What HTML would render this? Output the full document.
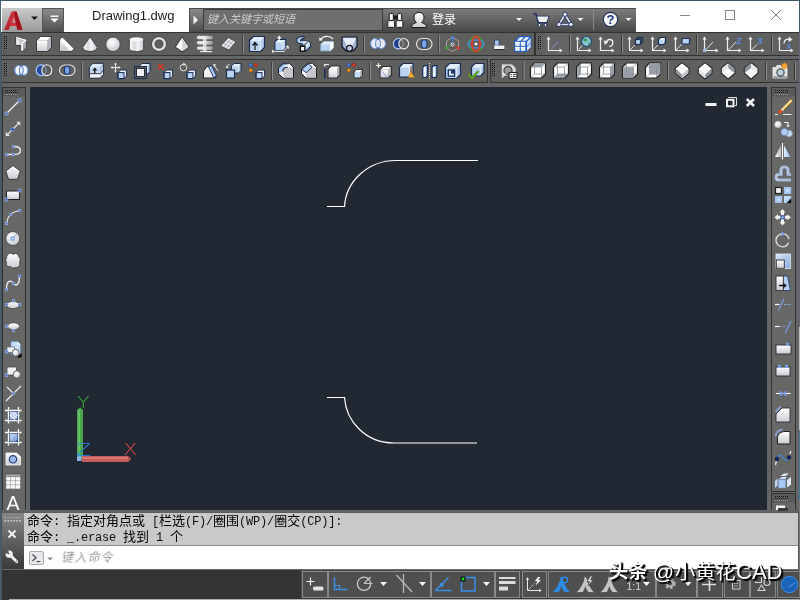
<!DOCTYPE html><html lang="zh-CN"><head><meta charset="utf-8"><title>Drawing1.dwg</title><style>
html,body{margin:0;padding:0;}
body{width:800px;height:600px;overflow:hidden;background:#646566;position:relative;font-family:"Liberation Sans","Noto Sans CJK SC",sans-serif;}
div,span{position:absolute;box-sizing:border-box;}
#doc,#stxt,#login,.hl,#cmdt,#wm,svg{will-change:transform;}
#ttl{left:0;top:0;width:800px;height:32px;background:#fff;}
#topline{left:0;top:0;width:800px;height:1px;background:#3f5563;}
#leftline{left:0;top:0;width:1px;height:600px;background:#466070;}
#leftline2{left:1px;top:32px;width:1px;height:568px;background:#46545c;}
#rightline{left:799px;top:0;width:1px;height:600px;background:linear-gradient(#3f5563 0,#3f5563 32px,#66667a 32px,#66667a 327px,#c0c0c0 327px,#c0c0c0 430px,#4c7898 430px,#4c7898 500px,#777 500px,#777 100%);}
#abtn{left:2px;top:8px;width:40px;height:24px;background:linear-gradient(#c9c9c9,#9b9b9b);}
#qbtn{left:42px;top:8px;width:22px;height:24px;background:linear-gradient(#8c8c8c,#4e4e4e);border:1px solid #555;border-bottom:0;}
#doc{left:92px;top:7px;font-size:13px;line-height:18px;color:#1a1a1a;white-space:nowrap;}
#srch{left:189px;top:8px;width:194px;height:24px;background:linear-gradient(#8a8a8a,#4c4c4c);border-top:1px solid #4a4a4a;border-left:1px solid #4a4a4a;}
#sbox{left:203px;top:9px;width:180px;height:22px;background:#6f6f6f;border:1px solid #3a3a3a;}
#stxt{left:207px;top:11px;font-size:11px;line-height:17px;color:#cacaca;font-style:italic;white-space:nowrap;}
#info{left:383px;top:8px;width:253px;height:24px;background:linear-gradient(#7c7c7c,#474747);border-top:1px solid #4a4a4a;}
#login{left:432px;top:11px;font-size:12px;line-height:18px;color:#fff;white-space:nowrap;}
.tb{background:#5f5f5e;border:1px solid #323232;}
#cv{left:30px;top:87px;width:737px;height:423px;background:#222831;}
#hist{left:24px;top:513px;width:774px;height:33px;background:#c9c9c9;}
#botline{left:9px;top:599px;width:791px;height:1px;background:#b0b0b0;}
#fr1{left:0;top:510px;width:800px;height:3px;background:linear-gradient(#66676a,#5a5b5e);}
#fr2{left:798px;top:510px;width:2px;height:60px;background:#555;}
#histl{left:2px;top:513px;width:22px;height:56px;background:linear-gradient(#868686,#3a3a3a);}
.hl{left:26.5px;font-family:"Liberation Mono","Noto Sans CJK SC",monospace;font-size:12px;line-height:16px;color:#111;white-space:pre;letter-spacing:-0.2px;}
.hl b{font-weight:400;font-size:13px;position:static;color:#000;letter-spacing:0;}
#cmd{left:24px;top:545px;width:774px;height:24px;background:#fff;border-top:1px solid #8a8a8a;}
#cmdt{left:62px;top:549px;font-size:12px;letter-spacing:1.2px;line-height:18px;color:#9a9a9a;white-space:nowrap;transform:skewX(-12deg);}
#stat{left:2px;top:569px;width:798px;height:31px;background:#343434;border-top:1px solid #6a6a6a;}
#tray{left:301px;top:570px;width:499px;height:28px;background:#4a4a4a;}
.wm{top:557.3px;line-height:30px;color:#fff;white-space:nowrap;text-shadow:1px 1px 0 #000,2px 2px 1px #000;will-change:transform;}
#wm1{left:608.8px;font-size:19.3px;font-weight:700;top:557.3px;}
#wm2{left:647.2px;font-size:21px;white-space:pre;}
#wm3{left:675.3px;font-size:20.3px;}
#wm4{left:736px;font-size:22px;}
svg{position:absolute;left:0;top:0;}
</style></head><body>
<div id="ttl"></div>
<div id="abtn"></div><div id="qbtn"></div>
<div id="doc">Drawing1.dwg</div>
<div id="srch"></div><div id="sbox"></div><div id="stxt">键入关键字或短语</div>
<div id="info"></div><div id="login">登录</div>
<div class="tb" style="left:1px;top:32px;width:534px;height:24px"></div>
<div class="tb" style="left:535px;top:32px;width:266px;height:24px"></div>
<div class="tb" style="left:1px;top:59px;width:487px;height:24px"></div>
<div class="tb" style="left:490px;top:59px;width:311px;height:24px"></div>
<div class="tb" style="left:2px;top:87px;width:24px;height:425px;background:#676766"></div>
<div class="tb" style="left:771px;top:87px;width:25px;height:405px;background:#676766"></div>
<div class="tb" style="left:771px;top:493px;width:25px;height:20px;background:#676766"></div>
<div id="cv"></div>
<div id="fr1"></div><div id="fr2"></div><div id="hist"></div><div id="histl"></div>
<div class="hl" style="top:513.5px"><b>命令</b>: <b>指定对角点或</b> [<b>栏选</b>(F)/<b>圈围</b>(WP)/<b>圈交</b>(CP)]:</div>
<div class="hl" style="top:529.5px"><b>命令</b>: _.erase <b>找到</b> 1 <b>个</b></div>
<div id="cmd"></div><div id="cmdt">键入命令</div>
<div id="stat"></div><div id="tray"></div><div id="botline"></div>
<svg width="800" height="600" viewBox="0 0 800 600">

<defs>
<linearGradient id="gw" x1="0" y1="0" x2="0" y2="1"><stop offset="0" stop-color="#ffffff"/><stop offset="1" stop-color="#c9cbd0"/></linearGradient>
<linearGradient id="gh" x1="0" y1="0" x2="1" y2="0"><stop offset="0" stop-color="#ffffff"/><stop offset="1" stop-color="#b9bcc2"/></linearGradient>
<linearGradient id="gb" x1="0" y1="0" x2="0" y2="1"><stop offset="0" stop-color="#d6e6f8"/><stop offset="1" stop-color="#9fc0ea"/></linearGradient>
<radialGradient id="gs" cx="0.4" cy="0.35" r="0.7"><stop offset="0" stop-color="#ffffff"/><stop offset="1" stop-color="#c4c6cc"/></radialGradient>
<linearGradient id="ga" x1="0" y1="0" x2="1" y2="1"><stop offset="0" stop-color="#dc4650"/><stop offset="1" stop-color="#9a0e18"/></linearGradient>
<linearGradient id="gh2" x1="0" y1="0" x2="1" y2="0"><stop offset="0" stop-color="#e8e8e8"/><stop offset="0.4" stop-color="#f6f6f6"/><stop offset="1" stop-color="#9c9c9c"/></linearGradient>
<linearGradient id="gbd" x1="0" y1="0" x2="1" y2="1"><stop offset="0" stop-color="#d6e6f8"/><stop offset="1" stop-color="#6a90d8"/></linearGradient>
<linearGradient id="gbd2" x1="0" y1="0" x2="1" y2="1"><stop offset="0" stop-color="#d6e6f8"/><stop offset="1" stop-color="#8aaae0"/></linearGradient>
<linearGradient id="gbh" x1="0" y1="0" x2="1" y2="0"><stop offset="0" stop-color="#e6f0fc"/><stop offset="1" stop-color="#8fb3e6"/></linearGradient>
<linearGradient id="gcy" x1="0" y1="0" x2="1" y2="0"><stop offset="0" stop-color="#ffffff"/><stop offset="0.35" stop-color="#d8dade"/><stop offset="0.6" stop-color="#f4f4f6"/><stop offset="1" stop-color="#c4c6cc"/></linearGradient>
<linearGradient id="gwd" x1="0" y1="0" x2="1" y2="1"><stop offset="0" stop-color="#f2f2f4"/><stop offset="0.6" stop-color="#c6c8ce"/><stop offset="1" stop-color="#e0e0e4"/></linearGradient>
</defs>

<path d="M4 30L11.5 11.5H16.5L22.5 30H17.5L16.3 26H10.2L8.6 30Z" fill="url(#ga)" /><path d="M14 11.5H16.5L22.5 30H17.5Z" fill="#a3121c" /><path d="M11.2 23L13.6 16.5L15.5 23Z" fill="#b0b0b0" /><path d="M10.2 26L13.5 17L14.5 19L12.5 23.5H15.8L16.3 26Z" fill="#d8343e" /><path d="M12.3 20.5L14.6 17.3L13.4 21.3Z" fill="#f2a8a8" /><path d="M31 16.5H38L34.5 20Z" fill="#1a1a1a" /><rect x="50.5" y="15.5" width="8" height="1.4" fill="#ffffff" /><path d="M50.5 18.5H58.5L54.5 22.5Z" fill="#ffffff" /><path d="M193.5 15.5L198 20L193.5 24.5Z" fill="#f0f0f0" /><rect x="393.5" y="15.5" width="4" height="4" fill="#1a1a1a" /><rect x="389.2" y="13.5" width="4.2" height="7" fill="#e4e4e4" stroke="#1a1a1a" stroke-width="1" rx="1.2"/><rect x="387.8" y="20.6" width="6.8" height="6.8" fill="#f4f4f4" stroke="#1a1a1a" stroke-width="1" rx="1"/><rect x="390.3" y="14.8" width="1.4" height="4.5" fill="#ffffff" /><rect x="397.5" y="13.5" width="4.2" height="7" fill="#e4e4e4" stroke="#1a1a1a" stroke-width="1" rx="1.2"/><rect x="396.1" y="20.6" width="6.8" height="6.8" fill="#f4f4f4" stroke="#1a1a1a" stroke-width="1" rx="1"/><rect x="398.6" y="14.8" width="1.4" height="4.5" fill="#ffffff" /><path d="M411.5 27.5C411.5 24 414 23.5 416.5 22.5C414.5 21 414 19 414 17C414 14 416 12.5 419 12.5C422 12.5 424 14 424 17C424 19 423.5 21 421.5 22.5C424 23.5 426.5 24 426.5 27.5Z" fill="url(#gw)" stroke="#1a1a1a" stroke-width="1" /><path d="M516 18H522L519 21Z" fill="#f0f0f0" /><path d="M577.5 18H583.5L580.5 21Z" fill="#f0f0f0" /><path d="M625.5 18H631.5L628.5 21Z" fill="#f0f0f0" /><path d="M533.5 14H536L538.5 22.5H546.5L548.5 16.5H537" fill="none" stroke="#1c2f5e" stroke-width="1.6" stroke-linejoin="round"/><path d="M537.2 16.5H548.5L546.5 22H539Z" fill="#f2f2f2" /><circle cx="539.5" cy="25" r="1.5" fill="#f2f2f2" stroke="#1c2f5e" stroke-width="1" /><circle cx="545.5" cy="25" r="1.5" fill="#f2f2f2" stroke="#1c2f5e" stroke-width="1" /><path d="M565 14.5L559 24.5H571Z" fill="none" stroke="#1c2f5e" stroke-width="3.2" stroke-linejoin="round"/><path d="M565 14.5L559 24.5H571Z" fill="none" stroke="#e6e6f0" stroke-width="1.6" stroke-linejoin="round"/><circle cx="565" cy="14.3" r="2.2" fill="#e6e6f0" stroke="#1c2f5e" stroke-width="0.9" /><circle cx="559" cy="24.5" r="2.2" fill="#e6e6f0" stroke="#1c2f5e" stroke-width="0.9" /><circle cx="571" cy="24.5" r="2.2" fill="#e6e6f0" stroke="#1c2f5e" stroke-width="0.9" /><line x1="593.5" y1="10" x2="593.5" y2="30" stroke="#8a8a8a" stroke-width="1" /><circle cx="610.5" cy="19.5" r="7.2" fill="#f4f4f4" stroke="#22325a" stroke-width="1.2" /><text x="610.6" y="24.2" font-family="Liberation Sans, sans-serif" font-weight="bold" font-size="13" fill="#1c2f8a" text-anchor="middle">?</text><line x1="680" y1="15.5" x2="690" y2="15.5" stroke="#858585" stroke-width="1" /><rect x="725.5" y="10.5" width="9" height="9" fill="none" stroke="#858585" stroke-width="1" /><path d="M771 10L781 20M781 10L771 20" fill="none" stroke="#808080" stroke-width="1" />
<path d="M327 206.5H344.5C346 181 368 160.5 396 160.5H478" fill="none" stroke="#fff" stroke-width="1.2"/><path d="M327 397.5H344.5C346 421.5 366 443 394 443H477" fill="none" stroke="#fff" stroke-width="1.2"/><rect x="705.5" y="103" width="11" height="3" fill="#f0f0f0" /><path d="M728.5 98V97.5H736.5V105.5H735" fill="none" stroke="#e0e0e0" stroke-width="1" /><rect x="727" y="99.8" width="6.5" height="6.5" fill="#222831" stroke="#f0f0f0" stroke-width="2" /><path d="M746.8 99L754 106M754 99L746.8 106" fill="none" stroke="#f0f0f0" stroke-width="2.6" /><rect x="77" y="410" width="6" height="49" fill="#4aa74d" /><path d="M77 410L80 407.3L83 410Z" fill="#4aa74d" /><rect x="78.2" y="410" width="1.6" height="48" fill="#6fc470" /><rect x="82" y="456" width="46.5" height="6" fill="#c65d5d" /><path d="M128.5 456L131 459L128.5 462Z" fill="#c65d5d" /><rect x="83" y="457.2" width="45" height="1.6" fill="#de7c7c" /><text x="83.3" y="408" font-family="DejaVu Sans, Liberation Sans, sans-serif" font-weight="200" font-size="16.5" fill="#3bb540" text-anchor="middle" transform="translate(83.3 0) scale(1.25 1) translate(-83.3 0)">Y</text><text x="130" y="455.5" font-family="DejaVu Sans, Liberation Sans, sans-serif" font-weight="200" font-size="16.5" fill="#e04a4a" text-anchor="middle" transform="translate(130.2 0) scale(1.25 1) translate(-130 0)">X</text><text x="83.3" y="455.7" font-family="DejaVu Sans, Liberation Sans, sans-serif" font-weight="200" font-size="17.5" fill="#2f84ea" text-anchor="middle" transform="translate(83.3 0) scale(1.3 1) translate(-83.3 0)">Z</text><rect x="77" y="456.5" width="4.5" height="4.5" fill="#8fb0ea" />
<rect x="4" y="36" width="1" height="1" fill="#101010" shape-rendering="crispEdges"/><rect x="6" y="36" width="1" height="1" fill="#101010" shape-rendering="crispEdges"/><rect x="7" y="36" width="1" height="1" fill="#6e6e6e" shape-rendering="crispEdges"/><rect x="4" y="38" width="1" height="1" fill="#101010" shape-rendering="crispEdges"/><rect x="6" y="38" width="1" height="1" fill="#101010" shape-rendering="crispEdges"/><rect x="7" y="38" width="1" height="1" fill="#6e6e6e" shape-rendering="crispEdges"/><rect x="4" y="40" width="1" height="1" fill="#101010" shape-rendering="crispEdges"/><rect x="6" y="40" width="1" height="1" fill="#101010" shape-rendering="crispEdges"/><rect x="7" y="40" width="1" height="1" fill="#6e6e6e" shape-rendering="crispEdges"/><rect x="4" y="42" width="1" height="1" fill="#101010" shape-rendering="crispEdges"/><rect x="6" y="42" width="1" height="1" fill="#101010" shape-rendering="crispEdges"/><rect x="7" y="42" width="1" height="1" fill="#6e6e6e" shape-rendering="crispEdges"/><rect x="4" y="44" width="1" height="1" fill="#101010" shape-rendering="crispEdges"/><rect x="6" y="44" width="1" height="1" fill="#101010" shape-rendering="crispEdges"/><rect x="7" y="44" width="1" height="1" fill="#6e6e6e" shape-rendering="crispEdges"/><rect x="4" y="46" width="1" height="1" fill="#101010" shape-rendering="crispEdges"/><rect x="6" y="46" width="1" height="1" fill="#101010" shape-rendering="crispEdges"/><rect x="7" y="46" width="1" height="1" fill="#6e6e6e" shape-rendering="crispEdges"/><rect x="4" y="48" width="1" height="1" fill="#101010" shape-rendering="crispEdges"/><rect x="6" y="48" width="1" height="1" fill="#101010" shape-rendering="crispEdges"/><rect x="7" y="48" width="1" height="1" fill="#6e6e6e" shape-rendering="crispEdges"/><path d="M15.8 37L26.3 40V47.5L22 51.5L20.8 51V45.5H16.8L15.8 44Z" fill="#c6c8ce" stroke="#2e3034" stroke-width="0.9" stroke-linejoin="round"/><path d="M16.4 38L21.4 43.6V45H17L16.4 44Z" fill="url(#gh)" /><path d="M23 43.6L25.9 40.9V47.2L23 50.1Z" fill="#a6a8b0" /><rect x="21.3" y="43.6" width="1.7" height="7.2" fill="#ffffff" /><path d="M16.2 37.4L25.8 40.3L21.8 43.8" fill="none" stroke="#ffffff" stroke-width="1.2" /><path d="M36.5 40.5L40.5 36.5H51.5L47.5 40.5Z" fill="#ffffff" /><path d="M47.5 40.5L51.5 36.5V47.5L47.5 51.5Z" fill="#b0b3ba" /><rect x="36.5" y="40.5" width="11" height="11" fill="url(#gw)" /><path d="M36.5 40.5L40.5 36.5H51.5V47.5L47.5 51.5H36.5Z" fill="none" stroke="#2c2e32" stroke-width="0.9" stroke-linejoin="miter"/><path d="M59.7 39.3L62.3 36.8L74.3 48.8L72 51.3H59.7Z" fill="#ffffff" stroke="#2e3034" stroke-width="0.9" stroke-linejoin="round"/><path d="M60.2 40.8L70.6 50.9H60.2Z" fill="url(#gwd)" /><path d="M90 36.8L82.9 47.3C82.9 52.8 97.2 52.8 97.2 47.3Z" fill="url(#gcy)" stroke="#3a3c40" stroke-width="0.9" stroke-linejoin="round"/><circle cx="113" cy="44.3" r="7.2" fill="url(#gs)" stroke="#3a3c40" stroke-width="0.8" /><path d="M129.3 39.5V49C129.3 52.3 143.7 52.3 143.7 49V39.5C143.7 36.3 129.3 36.3 129.3 39.5Z" fill="url(#gcy)" stroke="#3a3c40" stroke-width="0.9" /><ellipse cx="136.5" cy="39.6" rx="6.6" ry="2.2" fill="#fafafa" stroke="#d4d6da" stroke-width="0.5" /><circle cx="159" cy="44" r="5.8" fill="none" stroke="#3a3c40" stroke-width="3.8" /><circle cx="159" cy="44" r="5.8" fill="none" stroke="#dedfe2" stroke-width="2.6" /><path d="M182 37L175.3 47L182 51.8L189 47Z" fill="#ffffff" stroke="#2a2c30" stroke-width="1" stroke-linejoin="round"/><path d="M182 37.8L188.4 46.9L182 51.2Z" fill="#d4d6da" /><rect x="203" y="36" width="3.6" height="15.5" fill="#cfd0d6" /><rect x="196.8" y="35.8" width="16.2" height="3.4" fill="url(#gh2)" rx="1.7" opacity="0.92"/><rect x="196.8" y="41" width="16.2" height="3.4" fill="url(#gh2)" rx="1.7" opacity="0.92"/><rect x="196.8" y="46.4" width="16.2" height="3.4" fill="url(#gh2)" rx="1.7" opacity="0.92"/><rect x="200" y="51" width="12" height="1.2" fill="#e8e8e8" /><path d="M228.5 37.5L236 41.8L229 50L220.5 46Z" fill="#e6e6ec" stroke="#3a3c40" stroke-width="0.9" stroke-linejoin="round"/><path d="M225.8 40.5L233.8 44.5M223.2 43.2L231.5 47.2M231 39L223.5 47.3M233.5 40.4L226.2 48.7" fill="none" stroke="#9a9ca6" stroke-width="0.7" /><line x1="242.5" y1="35" x2="242.5" y2="53" stroke="#3e3e3e" stroke-width="1" /><line x1="243.5" y1="35" x2="243.5" y2="53" stroke="#8c8c8c" stroke-width="1" /><path d="M249.5 40.5L253.5 36.5H264.5L260.5 40.5Z" fill="#e2eefb" /><path d="M260.5 40.5L264.5 36.5V47.5L260.5 51.5Z" fill="#b4ccee" /><rect x="249.5" y="40.5" width="11" height="11" fill="#b9d3f0" /><path d="M249.8 40.5H260.5V51.2M260.5 40.5L264.0 37.0" fill="none" stroke="#f4f8fe" stroke-width="0.8" /><path d="M249.5 40.5L253.5 36.5H264.5V47.5L260.5 51.5H249.5Z" fill="none" stroke="#1b2d55" stroke-width="1.2" stroke-linejoin="miter"/><path d="M255 50V43.5M252.5 45.5L255 42.5L257.5 45.5" fill="none" stroke="#10131a" stroke-width="1.2" /><path d="M274.8 41.9L277.40000000000003 39.3H285.8L283.2 41.9Z" fill="#e2eefb" /><path d="M283.2 41.9L285.8 39.3V48.099999999999994L283.2 50.699999999999996Z" fill="#b4ccee" /><rect x="274.8" y="41.9" width="8.4" height="8.8" fill="#b9d3f0" /><path d="M275.1 41.9H283.2V50.4M283.2 41.9L285.3 39.8" fill="none" stroke="#f4f8fe" stroke-width="0.8" /><path d="M274.8 41.9L277.40000000000003 39.3H285.8V48.099999999999994L283.2 50.699999999999996H274.8Z" fill="none" stroke="#1b2d55" stroke-width="1.2" stroke-linejoin="miter"/><path d="M279.2 41.5V37.5" fill="none" stroke="#ffffff" stroke-width="1.3" /><path d="M276.8 38.6L279.2 35.6L281.6 38.6Z" fill="#ffffff" /><path d="M272.3 51.3H284.5M284.3 50.5L288 46.5M285.8 46.3H288.2V48.8M272.8 49.8V52.8" fill="none" stroke="#ffffff" stroke-width="1" /><path d="M296.8 40.2C296.8 37.5 299.5 36.5 304 36.5V38.6C301.5 38.6 300.6 39.4 300.6 41H306C309 41 310.6 42.6 310.6 45V46.5L306.3 50.6H303V45.6C303 44.2 302 43.6 300.2 43.6C298 43.6 296.8 42.2 296.8 40.2Z" fill="#b9d3f0" stroke="#1b2d55" stroke-width="1.1" stroke-linejoin="round"/><path d="M300.8 41.3H306C308.3 41.3 309.8 42.4 310 44.3L306 48V45.5C306 43.5 304.5 42.5 302 42.5Z" fill="#dbe8f8" /><path d="M301 48.5L307.5 42" fill="none" stroke="#10131a" stroke-width="1" /><rect x="300.3" y="46.3" width="4.6" height="4.9" fill="#f4f4f4" stroke="#08090c" stroke-width="1.3" /><path d="M320.5 44.5L324 41.5H333.5V48L330 51H320.5Z" fill="#b9d3f0" stroke="#7d94b8" stroke-width="0.8" /><path d="M320.5 44.5L324 41.5H333.5L330 44.5Z" fill="#e2eefb" /><path d="M330 44.5L333.5 41.5V48L330 51Z" fill="#ffffff" /><path d="M320.5 39.5C323 35.5 330 35.5 333 39" fill="none" stroke="#f4f4f4" stroke-width="1.2" /><path d="M319 37.5L319.5 41L323 40Z" fill="#f4f4f4" /><path d="M342 37H357V46.5L353 51H346L342 46.5Z" fill="#a3b3d2" stroke="#131a2c" stroke-width="1.2" stroke-linejoin="round"/><path d="M343 38H356L352 46.5H347Z" fill="#e6ebf5" /><circle cx="349.5" cy="48.3" r="3" fill="#c2cde2" stroke="#10131a" stroke-width="1.2" /><line x1="363.5" y1="35" x2="363.5" y2="53" stroke="#3e3e3e" stroke-width="1" /><line x1="364.5" y1="35" x2="364.5" y2="53" stroke="#8c8c8c" stroke-width="1" /><ellipse cx="374.9" cy="43.6" rx="4.3" ry="5" fill="#e8ebf6" stroke="#6a92e0" stroke-width="1" /><ellipse cx="381.2" cy="43.6" rx="4.3" ry="5" fill="#e8ebf6" stroke="#6a92e0" stroke-width="1" /><ellipse cx="378" cy="43.6" rx="2.4" ry="4.2" fill="#e2e6f4" stroke="#3e6cc8" stroke-width="0.9" /><ellipse cx="398.3" cy="43.7" rx="4.9" ry="5.2" fill="#1f3f8c" stroke="#9dbcf0" stroke-width="1.1" /><ellipse cx="403.7" cy="43.7" rx="4.9" ry="5.2" fill="#5f5f5e" stroke="#f0f0f0" stroke-width="1.1" /><ellipse cx="398.3" cy="43.7" rx="4.9" ry="5.2" fill="none" stroke="#c8d4ec" stroke-width="0.6" /><rect x="416.5" y="38.5" width="15.5" height="11" fill="none" stroke="#e8e8e8" stroke-width="1.1" rx="5.5"/><ellipse cx="424.2" cy="44" rx="2.8" ry="4.2" fill="#7ea6e6" stroke="#1c3a7a" stroke-width="1.1" /><line x1="438.5" y1="35" x2="438.5" y2="53" stroke="#3e3e3e" stroke-width="1" /><line x1="439.5" y1="35" x2="439.5" y2="53" stroke="#8c8c8c" stroke-width="1" /><path d="M452.5 37.5L458.5 41V48L452.5 51.5L446.5 48V41Z" fill="none" stroke="#b9a0a0" stroke-width="0.9" /><path d="M452.5 38V44.5" fill="none" stroke="#3a78d8" stroke-width="1.2" /><path d="M452.5 44.5L447 47.8" fill="none" stroke="#3aa03a" stroke-width="1" /><path d="M452.5 44.5L458 47.8" fill="none" stroke="#d03a2a" stroke-width="1" /><circle cx="452.5" cy="37.8" r="1.5" fill="#4a88e8" /><circle cx="446.6" cy="48" r="1.5" fill="#3aa83a" /><circle cx="458.4" cy="48" r="1.5" fill="#e03a2a" /><circle cx="452.5" cy="44.5" r="1.5" fill="#5d5d5d" stroke="#f4f4f4" stroke-width="1" /><circle cx="476" cy="44" r="7.3" fill="none" stroke="#3a9a3a" stroke-width="1.8" /><ellipse cx="476" cy="44" rx="7.6" ry="4" fill="none" stroke="#4a8ae0" stroke-width="1.5" /><ellipse cx="476" cy="44" rx="4" ry="7.4" fill="none" stroke="#d8402a" stroke-width="2" /><rect x="474.8" y="42.8" width="2.5" height="2.5" fill="#ffffff" /><rect x="494.5" y="40" width="4.6" height="6" fill="#a9c4ec" stroke="#34446a" stroke-width="0.9" /><rect x="494.3" y="45.6" width="10" height="3.4" fill="#f2f2f2" /><rect x="494.3" y="49" width="10" height="1" fill="#2a2c30" /><path d="M514.2 41L519.2 36H531.3V46.8L526.3 51.9H514.2Z" fill="#1e5ac8" /><rect x="515.2" y="41.9" width="4.5" height="4" fill="#e4effc" /><rect x="515.2" y="41.9" width="4.5" height="1.2" fill="#ffffff" /><rect x="520.8000000000001" y="41.9" width="4.5" height="4" fill="#e4effc" /><rect x="520.8000000000001" y="41.9" width="4.5" height="1.2" fill="#ffffff" /><rect x="515.2" y="46.9" width="4.5" height="4" fill="#e4effc" /><rect x="515.2" y="46.9" width="4.5" height="1.2" fill="#ffffff" /><rect x="520.8000000000001" y="46.9" width="4.5" height="4" fill="#e4effc" /><rect x="520.8000000000001" y="46.9" width="4.5" height="1.2" fill="#ffffff" /><path d="M516.6 40.8L519.8000000000001 37.2H523.8000000000001L520.6 40.8Z" fill="#f4f9ff" /><path d="M522.2 40.8L525.4000000000001 37.2H529.4000000000001L526.2 40.8Z" fill="#f4f9ff" /><path d="M527 41.9L530.6 38.1V42.3L527 46.1Z" fill="#cfe2fa" /><path d="M527 46.9L530.6 43.1V47.3L527 51.1Z" fill="#cfe2fa" /><rect x="538" y="36" width="1" height="1" fill="#101010" shape-rendering="crispEdges"/><rect x="540" y="36" width="1" height="1" fill="#101010" shape-rendering="crispEdges"/><rect x="541" y="36" width="1" height="1" fill="#6e6e6e" shape-rendering="crispEdges"/><rect x="538" y="38" width="1" height="1" fill="#101010" shape-rendering="crispEdges"/><rect x="540" y="38" width="1" height="1" fill="#101010" shape-rendering="crispEdges"/><rect x="541" y="38" width="1" height="1" fill="#6e6e6e" shape-rendering="crispEdges"/><rect x="538" y="40" width="1" height="1" fill="#101010" shape-rendering="crispEdges"/><rect x="540" y="40" width="1" height="1" fill="#101010" shape-rendering="crispEdges"/><rect x="541" y="40" width="1" height="1" fill="#6e6e6e" shape-rendering="crispEdges"/><rect x="538" y="42" width="1" height="1" fill="#101010" shape-rendering="crispEdges"/><rect x="540" y="42" width="1" height="1" fill="#101010" shape-rendering="crispEdges"/><rect x="541" y="42" width="1" height="1" fill="#6e6e6e" shape-rendering="crispEdges"/><rect x="538" y="44" width="1" height="1" fill="#101010" shape-rendering="crispEdges"/><rect x="540" y="44" width="1" height="1" fill="#101010" shape-rendering="crispEdges"/><rect x="541" y="44" width="1" height="1" fill="#6e6e6e" shape-rendering="crispEdges"/><rect x="538" y="46" width="1" height="1" fill="#101010" shape-rendering="crispEdges"/><rect x="540" y="46" width="1" height="1" fill="#101010" shape-rendering="crispEdges"/><rect x="541" y="46" width="1" height="1" fill="#6e6e6e" shape-rendering="crispEdges"/><rect x="538" y="48" width="1" height="1" fill="#101010" shape-rendering="crispEdges"/><rect x="540" y="48" width="1" height="1" fill="#101010" shape-rendering="crispEdges"/><rect x="541" y="48" width="1" height="1" fill="#6e6e6e" shape-rendering="crispEdges"/><rect x="545" y="33" width="24" height="22" fill="#656565" /><path d="M548.5 37.5V50.5H561.5" fill="none" stroke="#f0f0f0" stroke-width="1.2" /><path d="M546.5 39.5L548.5 36.5L550.5 39.5Z" fill="#f0f0f0" /><path d="M559.5 48.5L562.5 50.5L559.5 52.5Z" fill="#f0f0f0" /><path d="M551 49L558.5 41.5" fill="none" stroke="#8088b4" stroke-width="1.6" opacity="0.75"/><line x1="569.5" y1="35" x2="569.5" y2="53" stroke="#363636" stroke-width="1" /><line x1="570.5" y1="35" x2="570.5" y2="53" stroke="#8c8c8c" stroke-width="1" /><path d="M577.5 37.5V50.5H590.5" fill="none" stroke="#f0f0f0" stroke-width="1.2" /><path d="M575.5 39.5L577.5 36.5L579.5 39.5Z" fill="#f0f0f0" /><path d="M588.5 48.5L591.5 50.5L588.5 52.5Z" fill="#f0f0f0" /><path d="M579 49L584 44" fill="none" stroke="#e0e0e0" stroke-width="1" /><circle cx="586.5" cy="41.5" r="5" fill="#8cc4cc" stroke="#1e4a6a" stroke-width="1.2" /><path d="M583.5 39.5C585 38 587 38.5 587.5 40C586.5 41.5 584.5 42 583.5 41ZM588 42.5C589.5 42 590.5 43 590 44.5C589 45 588 44 588 42.5Z" fill="#3a9a5a" /><path d="M600.5 37.5V50.5H613.5" fill="none" stroke="#f0f0f0" stroke-width="1.2" /><path d="M598.5 39.5L600.5 36.5L602.5 39.5Z" fill="#f0f0f0" /><path d="M611.5 48.5L614.5 50.5L611.5 52.5Z" fill="#f0f0f0" /><path d="M606.5 42.5C607 38.5 612.8 38.5 612.8 42.5C612.8 45 611 46.3 609.3 46.3" fill="none" stroke="#f0f0f0" stroke-width="1.3" /><path d="M603.5 40.5L608.5 41.5L605 45Z" fill="#f0f0f0" /><line x1="621.5" y1="35" x2="621.5" y2="53" stroke="#363636" stroke-width="1" /><line x1="622.5" y1="35" x2="622.5" y2="53" stroke="#8c8c8c" stroke-width="1" /><path d="M629.5 37.5V50.5H642.5" fill="none" stroke="#f0f0f0" stroke-width="1.2" /><path d="M627.5 39.5L629.5 36.5L631.5 39.5Z" fill="#f0f0f0" /><path d="M640.5 48.5L643.5 50.5L640.5 52.5Z" fill="#f0f0f0" /><path d="M630 50L636 44" fill="none" stroke="#e0e0e0" stroke-width="1" /><rect x="637.5" y="37.5" width="5" height="5" fill="#5d5d5d" stroke="#1b2d55" stroke-width="1.2" /><rect x="635.5" y="39.5" width="5" height="5" fill="#b9d3f0" stroke="#1b2d55" stroke-width="1.2" /><path d="M652.5 37.5V50.5H665.5" fill="none" stroke="#f0f0f0" stroke-width="1.2" /><path d="M650.5 39.5L652.5 36.5L654.5 39.5Z" fill="#f0f0f0" /><path d="M663.5 48.5L666.5 50.5L663.5 52.5Z" fill="#f0f0f0" /><path d="M653 50L659 44" fill="none" stroke="#e0e0e0" stroke-width="1" /><path d="M658.5 39.5L660.5 37.5H665.5L663.5 39.5Z" fill="#e2eefb" /><path d="M663.5 39.5L665.5 37.5V42.5L663.5 44.5Z" fill="#b4ccee" /><rect x="658.5" y="39.5" width="5" height="5" fill="#b9d3f0" /><path d="M658.8 39.5H663.5V44.2M663.5 39.5L665.0 38.0" fill="none" stroke="#f4f8fe" stroke-width="0.8" /><path d="M658.5 39.5L660.5 37.5H665.5V42.5L663.5 44.5H658.5Z" fill="none" stroke="#1b2d55" stroke-width="1.1" stroke-linejoin="miter"/><path d="M675.5 37.5V50.5H688.5" fill="none" stroke="#f0f0f0" stroke-width="1.2" /><path d="M673.5 39.5L675.5 36.5L677.5 39.5Z" fill="#f0f0f0" /><path d="M686.5 48.5L689.5 50.5L686.5 52.5Z" fill="#f0f0f0" /><path d="M676 50L682 44" fill="none" stroke="#e0e0e0" stroke-width="1" /><rect x="682" y="38.5" width="7.5" height="5.5" fill="#b9d3f0" stroke="#1b2d55" stroke-width="1.2" rx="0.8"/><line x1="696.5" y1="35" x2="696.5" y2="53" stroke="#363636" stroke-width="1" /><line x1="697.5" y1="35" x2="697.5" y2="53" stroke="#8c8c8c" stroke-width="1" /><path d="M704.5 37.5V50.5H717.5" fill="none" stroke="#f0f0f0" stroke-width="1.2" /><path d="M702.5 39.5L704.5 36.5L706.5 39.5Z" fill="#f0f0f0" /><path d="M715.5 48.5L718.5 50.5L715.5 52.5Z" fill="#f0f0f0" /><path d="M705.5 50L713 42" fill="none" stroke="#e0e0e0" stroke-width="1" /><rect x="703" y="49" width="3" height="3" fill="#9ab8ea" /><path d="M727.5 37.5V50.5H740.5" fill="none" stroke="#f0f0f0" stroke-width="1.2" /><path d="M725.5 39.5L727.5 36.5L729.5 39.5Z" fill="#f0f0f0" /><path d="M738.5 48.5L741.5 50.5L738.5 52.5Z" fill="#f0f0f0" /><path d="M728.5 50L736 42" fill="none" stroke="#e0e0e0" stroke-width="1" /><text x="736" y="43.5" font-family="Liberation Sans, sans-serif" font-weight="bold" font-size="9" fill="#5b8ade">Z</text><path d="M750.5 37.5V50.5H763.5" fill="none" stroke="#f0f0f0" stroke-width="1.2" /><path d="M748.5 39.5L750.5 36.5L752.5 39.5Z" fill="#f0f0f0" /><path d="M761.5 48.5L764.5 50.5L761.5 52.5Z" fill="#f0f0f0" /><path d="M751.5 50L757 44.5" fill="none" stroke="#e0e0e0" stroke-width="1" /><text x="757" y="44" font-family="Liberation Sans, sans-serif" font-weight="bold" font-size="9.5" fill="#5b8ade">3</text><line x1="771.5" y1="35" x2="771.5" y2="53" stroke="#363636" stroke-width="1" /><line x1="772.5" y1="35" x2="772.5" y2="53" stroke="#8c8c8c" stroke-width="1" /><path d="M779.5 37.5V50.5H792.5" fill="none" stroke="#f0f0f0" stroke-width="1.2" /><path d="M777.5 39.5L779.5 36.5L781.5 39.5Z" fill="#f0f0f0" /><path d="M790.5 48.5L793.5 50.5L790.5 52.5Z" fill="#f0f0f0" /><path d="M784 43.5C784 39.5 787 38.5 790.5 39.5" fill="none" stroke="#f0f0f0" stroke-width="1.3" /><path d="M789 36.5L792.5 39.8L788.5 42Z" fill="#f0f0f0" /><text x="786.5" y="49" font-family="Liberation Sans, sans-serif" font-weight="bold" font-size="8.5" fill="#5b8ade">x</text>
<rect x="4" y="63" width="1" height="1" fill="#101010" shape-rendering="crispEdges"/><rect x="6" y="63" width="1" height="1" fill="#101010" shape-rendering="crispEdges"/><rect x="7" y="63" width="1" height="1" fill="#6e6e6e" shape-rendering="crispEdges"/><rect x="4" y="65" width="1" height="1" fill="#101010" shape-rendering="crispEdges"/><rect x="6" y="65" width="1" height="1" fill="#101010" shape-rendering="crispEdges"/><rect x="7" y="65" width="1" height="1" fill="#6e6e6e" shape-rendering="crispEdges"/><rect x="4" y="67" width="1" height="1" fill="#101010" shape-rendering="crispEdges"/><rect x="6" y="67" width="1" height="1" fill="#101010" shape-rendering="crispEdges"/><rect x="7" y="67" width="1" height="1" fill="#6e6e6e" shape-rendering="crispEdges"/><rect x="4" y="69" width="1" height="1" fill="#101010" shape-rendering="crispEdges"/><rect x="6" y="69" width="1" height="1" fill="#101010" shape-rendering="crispEdges"/><rect x="7" y="69" width="1" height="1" fill="#6e6e6e" shape-rendering="crispEdges"/><rect x="4" y="71" width="1" height="1" fill="#101010" shape-rendering="crispEdges"/><rect x="6" y="71" width="1" height="1" fill="#101010" shape-rendering="crispEdges"/><rect x="7" y="71" width="1" height="1" fill="#6e6e6e" shape-rendering="crispEdges"/><rect x="4" y="73" width="1" height="1" fill="#101010" shape-rendering="crispEdges"/><rect x="6" y="73" width="1" height="1" fill="#101010" shape-rendering="crispEdges"/><rect x="7" y="73" width="1" height="1" fill="#6e6e6e" shape-rendering="crispEdges"/><rect x="4" y="75" width="1" height="1" fill="#101010" shape-rendering="crispEdges"/><rect x="6" y="75" width="1" height="1" fill="#101010" shape-rendering="crispEdges"/><rect x="7" y="75" width="1" height="1" fill="#6e6e6e" shape-rendering="crispEdges"/><ellipse cx="18.6" cy="70.3" rx="3.8" ry="4.8" fill="#f2f4fa" stroke="#6a96e6" stroke-width="1.2" /><ellipse cx="24" cy="70.3" rx="3.8" ry="4.8" fill="#f2f4fa" stroke="#6a96e6" stroke-width="1.2" /><ellipse cx="21.3" cy="70.3" rx="2" ry="4" fill="#e8eefa" stroke="#3e6cc8" stroke-width="0.9" /><ellipse cx="41.2" cy="70.2" rx="5" ry="5.4" fill="#26499a" stroke="#9dbcf0" stroke-width="1.3" /><ellipse cx="46.8" cy="70.2" rx="5" ry="5.4" fill="#5d5d5d" stroke="#f0f0f0" stroke-width="1.1" /><ellipse cx="41.2" cy="70.2" rx="5" ry="5.4" fill="none" stroke="#9dbcf0" stroke-width="0.7" /><rect x="59.5" y="65" width="15.5" height="10.5" fill="none" stroke="#e8e8e8" stroke-width="1.1" rx="5.2"/><ellipse cx="67.2" cy="70.2" rx="2.7" ry="4.1" fill="#7ea6e6" stroke="#1c3a7a" stroke-width="1.1" /><line x1="81.5" y1="62" x2="81.5" y2="80" stroke="#3e3e3e" stroke-width="1" /><line x1="82.5" y1="62" x2="82.5" y2="80" stroke="#8c8c8c" stroke-width="1" /><path d="M89.3 67L92.8 63.3H103.6L100.2 67Z" fill="#dce8f8" /><path d="M100.2 67L103.6 63.3V74.4L100.2 78.2Z" fill="#b4c8e6" /><rect x="89.3" y="67" width="10.9" height="6.6" fill="#c6d9f1" /><rect x="89.3" y="74" width="10.9" height="4.2" fill="#f2f2f4" /><path d="M100.2 74L103.6 70.5V74.4L100.2 78.2Z" fill="#d4d6da" /><path d="M89.3 73.7H100.2L103.6 70" fill="none" stroke="#2a3040" stroke-width="0.8" /><path d="M89.3 67L92.8 63.3H103.6V74.4L100.2 78.2H89.3Z" fill="none" stroke="#1e2a44" stroke-width="1" stroke-linejoin="round"/><path d="M94.8 73.5V69.5" fill="none" stroke="#10131a" stroke-width="1.3" /><path d="M92.3 70.5L94.8 67.5L97.3 70.5Z" fill="#10131a" /><path d="M115.5 63.5V71.5M111.5 67.5H119.5" fill="none" stroke="#e8e8e8" stroke-width="1" /><path d="M114 64.5L115.5 62.5L117 64.5ZM114 70.5L115.5 72.5L117 70.5ZM112.5 66L110.5 67.5L112.5 69ZM118.5 66L120.5 67.5L118.5 69Z" fill="#e8e8e8" /><path d="M118 72.6L120.6 70H126.6L124 72.6Z" fill="#f6f9fe" /><path d="M124 72.6L126.6 70V76L124 78.6Z" fill="#eef3fb" /><rect x="118" y="72.6" width="6" height="6" fill="#bcd4f2" /><path d="M118 72.6L120.6 70H126.6V76L124 78.6H118Z" fill="none" stroke="#1b2d55" stroke-width="1" stroke-linejoin="miter"/><rect x="118" y="72.6" width="6" height="6" fill="none" stroke="#1b2d55" stroke-width="1" /><path d="M139.5 66.0L142.0 63.5H150.0L147.5 66.0Z" fill="#e2eefb" /><path d="M147.5 66.0L150.0 63.5V71.5L147.5 74.0Z" fill="#b4ccee" /><rect x="139.5" y="66.0" width="8" height="8" fill="#b9d3f0" /><path d="M139.8 66.0H147.5V73.7M147.5 66.0L149.5 64.0" fill="none" stroke="#f4f8fe" stroke-width="0.8" /><path d="M139.5 66.0L142.0 63.5H150.0V71.5L147.5 74.0H139.5Z" fill="none" stroke="#1b2d55" stroke-width="1" stroke-linejoin="miter"/><rect x="134.5" y="66.5" width="12" height="12" fill="#5d5d5d" stroke="#1b2d55" stroke-width="1.1" /><rect x="136.5" y="68.5" width="8" height="8" fill="#f0f2f6" stroke="#1e2024" stroke-width="0.9" /><path d="M158 64L163.5 69.5M163.5 64L158 69.5" fill="none" stroke="#dc3424" stroke-width="1.5" /><path d="M164 72.6L166.6 70H172.6L170 72.6Z" fill="#f6f9fe" /><path d="M170 72.6L172.6 70V76L170 78.6Z" fill="#eef3fb" /><rect x="164" y="72.6" width="6" height="6" fill="#bcd4f2" /><path d="M164 72.6L166.6 70H172.6V76L170 78.6H164Z" fill="none" stroke="#1b2d55" stroke-width="1" stroke-linejoin="miter"/><rect x="164" y="72.6" width="6" height="6" fill="none" stroke="#1b2d55" stroke-width="1" /><circle cx="183.5" cy="67.6" r="3.3" fill="none" stroke="#dcdcdc" stroke-width="1" /><path d="M183.3 62.6L185.8 64.3L183.3 66Z" fill="#e8e8e8" /><path d="M187 72.6L189.6 70H195.6L193 72.6Z" fill="#f6f9fe" /><path d="M193 72.6L195.6 70V76L193 78.6Z" fill="#eef3fb" /><rect x="187" y="72.6" width="6" height="6" fill="#bcd4f2" /><path d="M187 72.6L189.6 70H195.6V76L193 78.6H187Z" fill="none" stroke="#1b2d55" stroke-width="1" stroke-linejoin="miter"/><rect x="187" y="72.6" width="6" height="6" fill="none" stroke="#1b2d55" stroke-width="1" /><path d="M203.5 71L207 66.5H211L216 78H203.5Z" fill="#f2f2f4" stroke="#1e2024" stroke-width="1" stroke-linejoin="round"/><path d="M208.5 66.5L211.5 65.5L216.5 76L213.5 77.5Z" fill="#a9c8f4" stroke="#1b2d55" stroke-width="0.9" /><path d="M214 65L218 71" fill="none" stroke="#e8e8e8" stroke-width="1" /><path d="M213 64L216.3 64.5L214 67Z" fill="#e8e8e8" /><path d="M231.5 66.0L234.0 63.5H241.0L238.5 66.0Z" fill="#e2eefb" /><path d="M238.5 66.0L241.0 63.5V70.5L238.5 73.0Z" fill="#b4ccee" /><rect x="231.5" y="66.0" width="7" height="7" fill="#b9d3f0" /><path d="M231.8 66.0H238.5V72.7M238.5 66.0L240.5 64.0" fill="none" stroke="#f4f8fe" stroke-width="0.8" /><path d="M231.5 66.0L234.0 63.5H241.0V70.5L238.5 73.0H231.5Z" fill="none" stroke="#1b2d55" stroke-width="1" stroke-linejoin="miter"/><rect x="226.5" y="70" width="8" height="8" fill="#b9d3f0" stroke="#1b2d55" stroke-width="1.2" /><path d="M229.5 64.5C228 64.5 227 65.5 227 67.5" fill="none" stroke="#e8e8e8" stroke-width="1" /><path d="M225.5 66.5L227 68.8L228.6 66.5Z" fill="#e8e8e8" /><circle cx="250.5" cy="65.0" r="1.7" fill="#4a86e8" stroke="#1c3a7a" stroke-width="0.5" /><circle cx="255.8" cy="65.0" r="1.7" fill="#e03a2a" stroke="#7a1a10" stroke-width="0.5" /><circle cx="250.8" cy="70.3" r="1.7" fill="#f09a20" stroke="#8a4a00" stroke-width="0.5" /><path d="M256 72.6L258.6 70H264.6L262 72.6Z" fill="#f6f9fe" /><path d="M262 72.6L264.6 70V76L262 78.6Z" fill="#eef3fb" /><rect x="256" y="72.6" width="6" height="6" fill="#bcd4f2" /><path d="M256 72.6L258.6 70H264.6V76L262 78.6H256Z" fill="none" stroke="#1b2d55" stroke-width="1" stroke-linejoin="miter"/><rect x="256" y="72.6" width="6" height="6" fill="none" stroke="#1b2d55" stroke-width="1" /><line x1="271.5" y1="62" x2="271.5" y2="80" stroke="#3e3e3e" stroke-width="1" /><line x1="272.5" y1="62" x2="272.5" y2="80" stroke="#8c8c8c" stroke-width="1" /><path d="M278.5 67.5L283 63.3H289.5L293.5 67.5V78H283L278.5 73.5Z" fill="#f6f6f8" stroke="#1e2024" stroke-width="1" stroke-linejoin="round"/><path d="M283.3 77.5V70.8C283.3 68.6 285 67.6 287.2 67.6H293V77.5Z" fill="#c4c6cc" /><path d="M279 67.6L283.2 63.8H289.2C286.2 64.3 284.5 65.4 283.8 67.2C283 68.2 282.7 69.6 282.8 71L279 73.2Z" fill="#a9c8f4" /><path d="M282.9 71.6C282.6 68.6 284.6 67.1 287.8 67.3" fill="none" stroke="#1b2d55" stroke-width="1.1" /><path d="M279 67.6L283.2 63.8H288.5" fill="none" stroke="#1b2d55" stroke-width="0.9" /><path d="M301.5 69L308 63.3H312.5L316.5 67.5V78H306L301.5 73.5Z" fill="#f6f6f8" stroke="#1e2024" stroke-width="1" stroke-linejoin="round"/><path d="M306.2 77.5V72.6L311.3 67.9H316V77.5Z" fill="#c4c6cc" /><path d="M302 69.3L308.2 63.9L312.2 67.2L306 72.7Z" fill="#b4d0f4" stroke="#1b2d55" stroke-width="0.9" stroke-linejoin="round"/><path d="M328 69L331 66H340L337 69Z" fill="#ffffff" /><path d="M337 69L340 66V75L337 78Z" fill="#b0b3ba" /><rect x="328" y="69" width="9" height="9" fill="url(#gw)" /><path d="M328 69L331 66H340V75L337 78H328Z" fill="none" stroke="#2c2e32" stroke-width="1.1" stroke-linejoin="miter"/><line x1="324.8" y1="68.5" x2="324.8" y2="78.5" stroke="#1b2d55" stroke-width="1.6" /><path d="M325 64.5H329" fill="none" stroke="#e8e8e8" stroke-width="1.1" /><path d="M324 64L327 64L324 67Z" fill="#e8e8e8" /><circle cx="348.5" cy="65.0" r="1.7" fill="#4a86e8" stroke="#1c3a7a" stroke-width="0.5" /><circle cx="353.8" cy="65.0" r="1.7" fill="#e03a2a" stroke="#7a1a10" stroke-width="0.5" /><circle cx="348.8" cy="70.3" r="1.7" fill="#f09a20" stroke="#8a4a00" stroke-width="0.5" /><path d="M354 72.0L356.5 69.5H362.5L360 72.0Z" fill="#ffffff" /><path d="M360 72.0L362.5 69.5V75.5L360 78.0Z" fill="#b0b3ba" /><rect x="354" y="72.0" width="6" height="6" fill="#c4dcf6" /><path d="M354 72.0L356.5 69.5H362.5V75.5L360 78.0H354Z" fill="none" stroke="#2c2e32" stroke-width="1" stroke-linejoin="miter"/><line x1="369.5" y1="62" x2="369.5" y2="80" stroke="#3e3e3e" stroke-width="1" /><line x1="370.5" y1="62" x2="370.5" y2="80" stroke="#8c8c8c" stroke-width="1" /><path d="M378.5 63V68M376 65.5H381" fill="none" stroke="#f4f4f4" stroke-width="1.1" /><path d="M380 69.5L383 66.5H391.5L388.5 69.5Z" fill="#ffffff" /><path d="M388.5 69.5L391.5 66.5V75.0L388.5 78.0Z" fill="#b0b3ba" /><rect x="380" y="69.5" width="8.5" height="8.5" fill="url(#gw)" /><path d="M380 69.5L383 66.5H391.5V75.0L388.5 78.0H380Z" fill="none" stroke="#2c2e32" stroke-width="1.1" stroke-linejoin="miter"/><path d="M380.5 70L388 78" fill="none" stroke="#7a9ad8" stroke-width="0.9" /><path d="M399.5 67.0L403.0 63.5H413.0L409.5 67.0Z" fill="#e2eefb" /><path d="M409.5 67.0L413.0 63.5V73.5L409.5 77.0Z" fill="#b4ccee" /><rect x="399.5" y="67.0" width="10" height="10" fill="#b9d3f0" /><path d="M399.8 67.0H409.5V76.7M409.5 67.0L412.5 64.0" fill="none" stroke="#f4f8fe" stroke-width="0.8" /><path d="M399.5 67.0L403.0 63.5H413.0V73.5L409.5 77.0H399.5Z" fill="none" stroke="#1b2d55" stroke-width="1.2" stroke-linejoin="miter"/><path d="M411 66.5V72" fill="none" stroke="#8a5a20" stroke-width="1.2" /><path d="M411 71.5L408 77.5H414.5Z" fill="#f0a020" stroke="#a86a10" stroke-width="0.6" /><path d="M409.5 75H412.5M409 76.5H413.5" fill="none" stroke="#ffd060" stroke-width="0.6" /><path d="M422.8 67L424.3 65.5H427.6V76L426.1 77.5H422.8Z" fill="#8fb3e6" stroke="#1b2d55" stroke-width="1.1" /><rect x="423.6" y="67.3" width="2.4" height="9.4" fill="#f2f7fd" /><path d="M432.1 67L433.6 65.5H436.90000000000003V76L435.40000000000003 77.5H432.1Z" fill="#8fb3e6" stroke="#1b2d55" stroke-width="1.1" /><rect x="432.90000000000003" y="67.3" width="2.4" height="9.4" fill="#f2f7fd" /><line x1="429.5" y1="63" x2="429.5" y2="79" stroke="#f4f4f4" stroke-width="1" stroke-dasharray="1 1.2"/><path d="M445.5 67.5L449.5 63.5H460.5L456.5 67.5Z" fill="#e2eefb" /><path d="M456.5 67.5L460.5 63.5V74.5L456.5 78.5Z" fill="#b4ccee" /><rect x="445.5" y="67.5" width="11" height="11" fill="#b9d3f0" /><path d="M445.8 67.5H456.5V78.2M456.5 67.5L460.0 64.0" fill="none" stroke="#f4f8fe" stroke-width="0.8" /><path d="M445.5 67.5L449.5 63.5H460.5V74.5L456.5 78.5H445.5Z" fill="none" stroke="#1b2d55" stroke-width="1.2" stroke-linejoin="miter"/><rect x="448.3" y="70" width="6.2" height="6.2" fill="#dce9fa" stroke="#1b2d55" stroke-width="1.3" /><rect x="451" y="70" width="3.6" height="3.6" fill="#23386a" /><path d="M471.5 67.0L475.0 63.5H484.0L480.5 67.0Z" fill="#e2eefb" /><path d="M480.5 67.0L484.0 63.5V72.5L480.5 76.0Z" fill="#b4ccee" /><rect x="471.5" y="67.0" width="9" height="9" fill="#b9d3f0" /><path d="M471.8 67.0H480.5V75.7M480.5 67.0L483.5 64.0" fill="none" stroke="#f4f8fe" stroke-width="0.8" /><path d="M471.5 67.0L475.0 63.5H484.0V72.5L480.5 76.0H471.5Z" fill="none" stroke="#1b2d55" stroke-width="1.2" stroke-linejoin="miter"/><path d="M468.5 74.5L472 78L478.5 71" fill="none" stroke="#5aa020" stroke-width="2.4" stroke-linejoin="miter"/><rect x="492" y="63" width="1" height="1" fill="#101010" shape-rendering="crispEdges"/><rect x="494" y="63" width="1" height="1" fill="#101010" shape-rendering="crispEdges"/><rect x="495" y="63" width="1" height="1" fill="#6e6e6e" shape-rendering="crispEdges"/><rect x="492" y="65" width="1" height="1" fill="#101010" shape-rendering="crispEdges"/><rect x="494" y="65" width="1" height="1" fill="#101010" shape-rendering="crispEdges"/><rect x="495" y="65" width="1" height="1" fill="#6e6e6e" shape-rendering="crispEdges"/><rect x="492" y="67" width="1" height="1" fill="#101010" shape-rendering="crispEdges"/><rect x="494" y="67" width="1" height="1" fill="#101010" shape-rendering="crispEdges"/><rect x="495" y="67" width="1" height="1" fill="#6e6e6e" shape-rendering="crispEdges"/><rect x="492" y="69" width="1" height="1" fill="#101010" shape-rendering="crispEdges"/><rect x="494" y="69" width="1" height="1" fill="#101010" shape-rendering="crispEdges"/><rect x="495" y="69" width="1" height="1" fill="#6e6e6e" shape-rendering="crispEdges"/><rect x="492" y="71" width="1" height="1" fill="#101010" shape-rendering="crispEdges"/><rect x="494" y="71" width="1" height="1" fill="#101010" shape-rendering="crispEdges"/><rect x="495" y="71" width="1" height="1" fill="#6e6e6e" shape-rendering="crispEdges"/><rect x="492" y="73" width="1" height="1" fill="#101010" shape-rendering="crispEdges"/><rect x="494" y="73" width="1" height="1" fill="#101010" shape-rendering="crispEdges"/><rect x="495" y="73" width="1" height="1" fill="#6e6e6e" shape-rendering="crispEdges"/><rect x="492" y="75" width="1" height="1" fill="#101010" shape-rendering="crispEdges"/><rect x="494" y="75" width="1" height="1" fill="#101010" shape-rendering="crispEdges"/><rect x="495" y="75" width="1" height="1" fill="#6e6e6e" shape-rendering="crispEdges"/><path d="M501.5 64H512L516 68V76H501.5Z" fill="#dcdcdc" stroke="#6a6a6a" stroke-width="0.8" /><circle cx="508" cy="70.5" r="4" fill="#9a9a9a" stroke="#4a4a4a" stroke-width="1.4" /><path d="M502 77.5L505.5 73.5" fill="none" stroke="#e8e8e8" stroke-width="1.3" /><rect x="509" y="72.5" width="8" height="6" fill="#f0f0f0" stroke="#1e2024" stroke-width="1.1" rx="0.8"/><path d="M510.5 74.5H511.8M513 74.5H515.8M510.5 76.5H511.8M513 76.5H515.8" fill="none" stroke="#3a3a3a" stroke-width="0.9" /><line x1="523.1" y1="62" x2="523.1" y2="80" stroke="#363636" stroke-width="1" /><line x1="524.1" y1="62" x2="524.1" y2="80" stroke="#8c8c8c" stroke-width="1" /><path d="M530.5 67L534.5 63H545.5V74L541.5 78H530.5Z" fill="#ffffff" stroke="#1e2024" stroke-width="1.2" stroke-linejoin="round"/><path d="M531.3 67L534.8 63.6H544.7L541.2 67Z" fill="#9aa0a8" /><path d="M534.5 63.6V74H544.9M534.5 74L531.1 77.4" fill="none" stroke="#8a8e94" stroke-width="0.8" /><path d="M531.1 67H541.5V77.4M541.5 67L544.9 63.6" fill="none" stroke="#8a8e94" stroke-width="0.8" /><path d="M553.5 67L557.5 63H568.5V74L564.5 78H553.5Z" fill="#ffffff" stroke="#1e2024" stroke-width="1.2" stroke-linejoin="round"/><path d="M554.3 77.4L557.5 74H567.7L564.5 77.4Z" fill="#9aa0a8" /><path d="M557.5 63.6V74H567.9M557.5 74L554.1 77.4" fill="none" stroke="#8a8e94" stroke-width="0.8" /><path d="M554.1 67H564.5V77.4M564.5 67L567.9 63.6" fill="none" stroke="#8a8e94" stroke-width="0.8" /><path d="M576.5 67L580.5 63H591.5V74L587.5 78H576.5Z" fill="#ffffff" stroke="#1e2024" stroke-width="1.2" stroke-linejoin="round"/><path d="M577.1 67.5L580.5 64V74L577.1 77.2Z" fill="#9aa0a8" /><path d="M580.5 63.6V74H590.9M580.5 74L577.1 77.4" fill="none" stroke="#8a8e94" stroke-width="0.8" /><path d="M577.1 67H587.5V77.4M587.5 67L590.9 63.6" fill="none" stroke="#8a8e94" stroke-width="0.8" /><path d="M599.5 67L603.5 63H614.5V74L610.5 78H599.5Z" fill="#ffffff" stroke="#1e2024" stroke-width="1.2" stroke-linejoin="round"/><path d="M610.5 67.3L613.9 64V73.7L610.5 77.2Z" fill="#9aa0a8" /><path d="M603.5 63.6V74H613.9M603.5 74L600.1 77.4" fill="none" stroke="#8a8e94" stroke-width="0.8" /><path d="M600.1 67H610.5V77.4M610.5 67L613.9 63.6" fill="none" stroke="#8a8e94" stroke-width="0.8" /><path d="M622.5 67L626.5 63H637.5V74L633.5 78H622.5Z" fill="#ffffff" stroke="#1e2024" stroke-width="1.2" stroke-linejoin="round"/><rect x="623.1" y="67.4" width="10.4" height="10.2" fill="#9aa0a8" /><path d="M626.5 63.6V74H636.9M626.5 74L623.1 77.4" fill="none" stroke="#8a8e94" stroke-width="0.8" /><path d="M623.1 67H633.5V77.4M633.5 67L636.9 63.6" fill="none" stroke="#8a8e94" stroke-width="0.8" /><path d="M645.5 67L649.5 63H660.5V74L656.5 78H645.5Z" fill="#ffffff" stroke="#1e2024" stroke-width="1.2" stroke-linejoin="round"/><rect x="649.5" y="63.6" width="11" height="10.6" fill="#9aa0a8" /><path d="M649.5 63.6V74H659.9M649.5 74L646.1 77.4" fill="none" stroke="#8a8e94" stroke-width="0.8" /><path d="M646.1 67H656.5V77.4M656.5 67L659.9 63.6" fill="none" stroke="#8a8e94" stroke-width="0.8" /><line x1="667.5" y1="62" x2="667.5" y2="80" stroke="#363636" stroke-width="1" /><line x1="668.5" y1="62" x2="668.5" y2="80" stroke="#8c8c8c" stroke-width="1" /><path d="M682.0999999999999 62.6L688.9 68.1V73.1L682.0999999999999 79.1L675.3 73.1V68.1Z" fill="#ffffff" stroke="#1e2024" stroke-width="1.1" stroke-linejoin="round"/><path d="M675.9 69.1L682.0999999999999 73.6V78.2L675.9 73.0Z" fill="#8e9299" /><path d="M688.3 69.1L682.0999999999999 73.6V78.2L688.3 73.0Z" fill="#c4c7cc" /><path d="M682.0999999999999 68.1L685.9 71.1L682.0999999999999 74.4L678.3 71.1Z" fill="#ffffff" stroke="#d0d2d6" stroke-width="0.5" /><path d="M705.0999999999999 62.6L711.9 68.1V73.1L705.0999999999999 79.1L698.3 73.1V68.1Z" fill="#ffffff" stroke="#1e2024" stroke-width="1.1" stroke-linejoin="round"/><path d="M711.3 69.1L705.0999999999999 73.6V78.2L711.3 73.0Z" fill="#8e9299" /><path d="M698.9 69.1L705.0999999999999 73.6V78.2L698.9 73.0Z" fill="#e4e6ea" /><path d="M705.0999999999999 68.1L708.9 71.1L705.0999999999999 74.4L701.3 71.1Z" fill="#ffffff" stroke="#d0d2d6" stroke-width="0.5" /><path d="M728.0999999999999 62.6L734.9 68.1V73.1L728.0999999999999 79.1L721.3 73.1V68.1Z" fill="#ffffff" stroke="#1e2024" stroke-width="1.1" stroke-linejoin="round"/><path d="M728.0999999999999 63.5L734.3 68.4V72.6L728.0999999999999 69.1Z" fill="#8e9299" /><path d="M728.0999999999999 63.5L721.9 68.4V72.6L728.0999999999999 69.1Z" fill="#e4e6ea" /><path d="M728.0999999999999 68.1L731.9 71.1L728.0999999999999 74.4L724.3 71.1Z" fill="#ffffff" stroke="#d0d2d6" stroke-width="0.5" /><path d="M751.0999999999999 62.6L757.9 68.1V73.1L751.0999999999999 79.1L744.3 73.1V68.1Z" fill="#ffffff" stroke="#1e2024" stroke-width="1.1" stroke-linejoin="round"/><path d="M751.0999999999999 63.5L744.9 68.4V72.6L751.0999999999999 69.1Z" fill="#8e9299" /><path d="M751.0999999999999 63.5L757.3 68.4V72.6L751.0999999999999 69.1Z" fill="#e4e6ea" /><path d="M751.0999999999999 68.1L754.9 71.1L751.0999999999999 74.4L747.3 71.1Z" fill="#ffffff" stroke="#d0d2d6" stroke-width="0.5" /><line x1="765.5" y1="62" x2="765.5" y2="80" stroke="#363636" stroke-width="1" /><line x1="766.5" y1="62" x2="766.5" y2="80" stroke="#8c8c8c" stroke-width="1" /><path d="M773 67.5H776L777 65.5H780.5L781.5 67.5H787V78H773Z" fill="#dedfe2" stroke="#f4f4f4" stroke-width="0.8" /><rect x="773.5" y="76" width="13.5" height="2" fill="#a0a4aa" /><circle cx="780.5" cy="72.5" r="3.6" fill="#bcd0d8" stroke="#4a4e56" stroke-width="1.2" /><circle cx="784.5" cy="66" r="2.8" fill="#f08a20" /><path d="M784.5 62.5V69.5M781 66H788M782 63.5L787 68.5M787 63.5L782 68.5" fill="none" stroke="#f6b040" stroke-width="0.7" /><line x1="794.5" y1="62" x2="794.5" y2="80" stroke="#363636" stroke-width="1" /><line x1="795.5" y1="62" x2="795.5" y2="80" stroke="#8c8c8c" stroke-width="1" />
<rect x="3" y="88" width="22" height="8.5" fill="#5a5a5a" /><rect x="5" y="90" width="1" height="1.3" fill="#141414" shape-rendering="crispEdges"/><rect x="5" y="92" width="1" height="1.3" fill="#141414" shape-rendering="crispEdges"/><rect x="5" y="93.6" width="1" height="1" fill="#9a9a9a" shape-rendering="crispEdges"/><rect x="7" y="90" width="1" height="1.3" fill="#141414" shape-rendering="crispEdges"/><rect x="7" y="92" width="1" height="1.3" fill="#141414" shape-rendering="crispEdges"/><rect x="7" y="93.6" width="1" height="1" fill="#9a9a9a" shape-rendering="crispEdges"/><rect x="9" y="90" width="1" height="1.3" fill="#141414" shape-rendering="crispEdges"/><rect x="9" y="92" width="1" height="1.3" fill="#141414" shape-rendering="crispEdges"/><rect x="9" y="93.6" width="1" height="1" fill="#9a9a9a" shape-rendering="crispEdges"/><rect x="11" y="90" width="1" height="1.3" fill="#141414" shape-rendering="crispEdges"/><rect x="11" y="92" width="1" height="1.3" fill="#141414" shape-rendering="crispEdges"/><rect x="11" y="93.6" width="1" height="1" fill="#9a9a9a" shape-rendering="crispEdges"/><rect x="13" y="90" width="1" height="1.3" fill="#141414" shape-rendering="crispEdges"/><rect x="13" y="92" width="1" height="1.3" fill="#141414" shape-rendering="crispEdges"/><rect x="13" y="93.6" width="1" height="1" fill="#9a9a9a" shape-rendering="crispEdges"/><rect x="15" y="90" width="1" height="1.3" fill="#141414" shape-rendering="crispEdges"/><rect x="15" y="92" width="1" height="1.3" fill="#141414" shape-rendering="crispEdges"/><rect x="15" y="93.6" width="1" height="1" fill="#9a9a9a" shape-rendering="crispEdges"/><rect x="17" y="90" width="1" height="1.3" fill="#141414" shape-rendering="crispEdges"/><rect x="17" y="92" width="1" height="1.3" fill="#141414" shape-rendering="crispEdges"/><rect x="17" y="93.6" width="1" height="1" fill="#9a9a9a" shape-rendering="crispEdges"/><line x1="6.5" y1="113.5" x2="19.5" y2="100.5" stroke="#f2f2f2" stroke-width="1.3" /><rect x="5.1" y="112.1" width="2.8" height="2.8" fill="#3d5ca6" stroke="#8ea9de" stroke-width="0.9" /><rect x="18.1" y="99.1" width="2.8" height="2.8" fill="#3d5ca6" stroke="#8ea9de" stroke-width="0.9" /><line x1="7" y1="135" x2="19.5" y2="122.5" stroke="#e4e4e4" stroke-width="1.2" /><path d="M16.3 121.8H20.3V125.8Z" fill="#e4e4e4" /><path d="M5.8 131.8V136H10Z" fill="#e4e4e4" /><circle cx="12.5" cy="129.3" r="1.6" fill="#1a3ab0" stroke="#8fb0ea" stroke-width="0.8" /><path d="M6.5 154.5H14C22.5 154.5 22.5 146.5 14 146.5" fill="none" stroke="#f2f2f2" stroke-width="1.3" /><rect x="12.4" y="145.4" width="2.2" height="2.2" fill="#3d5ca6" stroke="#8ea9de" stroke-width="0.9" /><rect x="5.4" y="153.4" width="2.2" height="2.2" fill="#3d5ca6" stroke="#8ea9de" stroke-width="0.9" /><rect x="12.4" y="153.4" width="2.2" height="2.2" fill="#3d5ca6" stroke="#8ea9de" stroke-width="0.9" /><path d="M13 165.5L20.3 171L17.5 179.3H8.5L5.8 171Z" fill="url(#gw)" stroke="#2e3034" stroke-width="0.9" stroke-linejoin="round"/><rect x="6.5" y="191" width="13" height="8.5" fill="url(#gw)" stroke="#1e2024" stroke-width="1" /><rect x="18.1" y="189.1" width="2.8" height="2.8" fill="#3d5ca6" stroke="#8ea9de" stroke-width="0.9" /><rect x="5.1" y="198.1" width="2.8" height="2.8" fill="#3d5ca6" stroke="#8ea9de" stroke-width="0.9" /><path d="M6.5 223.5C7.5 216 12 211.5 19.5 210.5" fill="none" stroke="#f2f2f2" stroke-width="1.2" /><rect x="5.4" y="222.4" width="2.2" height="2.2" fill="#3d5ca6" stroke="#8ea9de" stroke-width="0.9" /><rect x="9.4" y="213.4" width="2.2" height="2.2" fill="#3d5ca6" stroke="#8ea9de" stroke-width="0.9" /><rect x="18.4" y="209.4" width="2.2" height="2.2" fill="#3d5ca6" stroke="#8ea9de" stroke-width="0.9" /><circle cx="12.8" cy="238.5" r="7" fill="url(#gs)" stroke="#3a3c40" stroke-width="0.8" /><line x1="12.5" y1="238.5" x2="17.5" y2="233.5" stroke="#7a9ad8" stroke-width="0.9" /><rect x="11" y="237" width="3" height="3" fill="#e8eefa" stroke="#5a86d8" stroke-width="0.9" /><path d="M8 254.5C9.5 252.5 12 253 13 254.5C15 252.5 18.5 253.5 18.5 256.5C20.5 257.5 20.5 261 19.5 262.5C20.5 265.5 18.5 268 15.5 267.5C13.5 268.5 11.5 268 10.5 266.5C7.5 267.5 5.5 265 6.5 262.5C5.5 260.5 5.5 258.5 7 257.5C6 256.5 7 255 8 254.5Z" fill="url(#gw)" stroke="#2e3034" stroke-width="0.8" /><path d="M6.5 289.5C6.5 280 11 279.5 13.5 283.5C17 287.5 19.5 283 19.5 276.5" fill="none" stroke="#f2f2f2" stroke-width="1.3" /><rect x="18.4" y="275.2" width="2.2" height="2.2" fill="#3d5ca6" stroke="#8ea9de" stroke-width="0.9" /><rect x="12.4" y="282.4" width="2.2" height="2.2" fill="#3d5ca6" stroke="#8ea9de" stroke-width="0.9" /><rect x="5.4" y="288.4" width="2.2" height="2.2" fill="#3d5ca6" stroke="#8ea9de" stroke-width="0.9" /><ellipse cx="13" cy="305" rx="6.3" ry="3.6" fill="url(#gw)" stroke="#3a3c40" stroke-width="0.7" /><rect x="12.4" y="299.7" width="2.2" height="2.2" fill="#3d5ca6" stroke="#8ea9de" stroke-width="0.9" /><rect x="5.4" y="303.4" width="2.2" height="2.2" fill="#3d5ca6" stroke="#8ea9de" stroke-width="0.9" /><rect x="18.4" y="303.4" width="2.2" height="2.2" fill="#3d5ca6" stroke="#8ea9de" stroke-width="0.9" /><ellipse cx="13.5" cy="326.3" rx="6" ry="3.5" fill="url(#gw)" stroke="#3a3c40" stroke-width="0.7" /><rect x="5.4" y="325.2" width="2.2" height="2.2" fill="#3d5ca6" stroke="#8ea9de" stroke-width="0.9" /><rect x="12.4" y="329.4" width="2.2" height="2.2" fill="#3d5ca6" stroke="#8ea9de" stroke-width="0.9" /><path d="M11 341.5H17.5L20.5 344.5V354H11Z" fill="#c6dcf4" stroke="#6a8ac0" stroke-width="0.7" /><path d="M17.5 341.5V344.5H20.5Z" fill="#ffffff" /><rect x="7" y="347" width="7.5" height="5.5" fill="#f0f2f6" stroke="#5a6a80" stroke-width="0.7" /><path d="M17 357.5H21.5V353Z" fill="#000000" /><circle cx="15.7" cy="352.8" r="3.5" fill="url(#gs)" stroke="#4a4c50" stroke-width="0.8" /><rect x="5.3" y="350.5" width="2.4000000000000004" height="2.4000000000000004" fill="#3d5ca6" stroke="#8ea9de" stroke-width="0.9" /><rect x="7" y="367" width="9.5" height="8" fill="#f0f2f6" stroke="#4a4c50" stroke-width="0.8" /><circle cx="16.8" cy="374.5" r="3.7" fill="url(#gs)" stroke="#4a4c50" stroke-width="0.8" /><rect x="5.3" y="374.0" width="2.4000000000000004" height="2.4000000000000004" fill="#3d5ca6" stroke="#8ea9de" stroke-width="0.9" /><path d="M7 387L13.5 393.5M21 386L6 401" fill="none" stroke="#f2f2f2" stroke-width="1.1" /><rect x="12.4" y="392.4" width="2.2" height="2.2" fill="#3d5ca6" stroke="#8ea9de" stroke-width="0.9" /><path d="M8.5 407V423.5M18.5 407V423.5M5 410.5H21.5M5 420.5H21.5" fill="none" stroke="#ffffff" stroke-width="1.3" /><rect x="9.5" y="411.5" width="8.3" height="8.3" fill="#a4bcee" stroke="#3a4a7a" stroke-width="0.6" /><path d="M9.8 414.5L14.8 419.5M10.5 411.8L17.5 418.8M13.5 411.8L17.5 415.8" fill="none" stroke="#f4f6fc" stroke-width="1.1" /><path d="M15.5 419.5H18V417Z" fill="#2c4c9a" /><path d="M18.5 416.5L20 415M12 422.5L13.5 421" fill="none" stroke="#9ab8ea" stroke-width="0.8" /><path d="M8.5 429V445.5M18.5 429V445.5M5 432.5H21.5M5 442.5H21.5" fill="none" stroke="#ffffff" stroke-width="1.3" /><rect x="9.5" y="433.5" width="8.3" height="8.3" fill="url(#gbd)" stroke="#3a4a7a" stroke-width="0.6" /><path d="M15.5 441.5H18V439Z" fill="#2c4c9a" /><path d="M18.5 438.5L20 437M12 444.5L13.5 443" fill="none" stroke="#9ab8ea" stroke-width="0.8" /><path d="M6 453H16.5L20.5 456.5V465H6Z" fill="url(#gw)" stroke="#f8f8f8" stroke-width="0.8" /><circle cx="13" cy="459.3" r="3.7" fill="#9dbcea" stroke="#24407a" stroke-width="1.2" /><rect x="5.8" y="473.5" width="14.8" height="15.6" fill="#7c7c7c" /><rect x="5.8" y="473.5" width="14.8" height="0.8" fill="#3c3c3c" /><rect x="6.2" y="474.4" width="14" height="2" fill="#a8a8a8" /><rect x="6.2" y="477.1" width="4.4" height="3.5" fill="#f8f8f8" /><rect x="11.0" y="477.1" width="4.4" height="3.5" fill="#f8f8f8" /><rect x="15.8" y="477.1" width="4.4" height="3.5" fill="#f8f8f8" /><rect x="6.2" y="481.1" width="4.4" height="3.5" fill="#f8f8f8" /><rect x="11.0" y="481.1" width="4.4" height="3.5" fill="#f8f8f8" /><rect x="15.8" y="481.1" width="4.4" height="3.5" fill="#f8f8f8" /><rect x="6.2" y="485.1" width="4.4" height="3.5" fill="#f8f8f8" /><rect x="11.0" y="485.1" width="4.4" height="3.5" fill="#f8f8f8" /><rect x="15.8" y="485.1" width="4.4" height="3.5" fill="#f8f8f8" /><text x="13" y="510" font-family="Liberation Sans, sans-serif" font-size="19.5" fill="#ffffff" text-anchor="middle">A</text>
<rect x="772" y="88" width="23" height="8.5" fill="#5a5a5a" /><rect x="775" y="90" width="1" height="1.3" fill="#141414" shape-rendering="crispEdges"/><rect x="775" y="92" width="1" height="1.3" fill="#141414" shape-rendering="crispEdges"/><rect x="775" y="93.6" width="1" height="1" fill="#9a9a9a" shape-rendering="crispEdges"/><rect x="777" y="90" width="1" height="1.3" fill="#141414" shape-rendering="crispEdges"/><rect x="777" y="92" width="1" height="1.3" fill="#141414" shape-rendering="crispEdges"/><rect x="777" y="93.6" width="1" height="1" fill="#9a9a9a" shape-rendering="crispEdges"/><rect x="779" y="90" width="1" height="1.3" fill="#141414" shape-rendering="crispEdges"/><rect x="779" y="92" width="1" height="1.3" fill="#141414" shape-rendering="crispEdges"/><rect x="779" y="93.6" width="1" height="1" fill="#9a9a9a" shape-rendering="crispEdges"/><rect x="781" y="90" width="1" height="1.3" fill="#141414" shape-rendering="crispEdges"/><rect x="781" y="92" width="1" height="1.3" fill="#141414" shape-rendering="crispEdges"/><rect x="781" y="93.6" width="1" height="1" fill="#9a9a9a" shape-rendering="crispEdges"/><rect x="783" y="90" width="1" height="1.3" fill="#141414" shape-rendering="crispEdges"/><rect x="783" y="92" width="1" height="1.3" fill="#141414" shape-rendering="crispEdges"/><rect x="783" y="93.6" width="1" height="1" fill="#9a9a9a" shape-rendering="crispEdges"/><rect x="785" y="90" width="1" height="1.3" fill="#141414" shape-rendering="crispEdges"/><rect x="785" y="92" width="1" height="1.3" fill="#141414" shape-rendering="crispEdges"/><rect x="785" y="93.6" width="1" height="1" fill="#9a9a9a" shape-rendering="crispEdges"/><rect x="787" y="90" width="1" height="1.3" fill="#141414" shape-rendering="crispEdges"/><rect x="787" y="92" width="1" height="1.3" fill="#141414" shape-rendering="crispEdges"/><rect x="787" y="93.6" width="1" height="1" fill="#9a9a9a" shape-rendering="crispEdges"/><line x1="775" y1="114.5" x2="778" y2="114.5" stroke="#f2f2f2" stroke-width="1" /><line x1="783" y1="114.5" x2="791.5" y2="114.5" stroke="#f2f2f2" stroke-width="1" /><path d="M791 99.5L792.5 101.5L784 110L782 108Z" fill="#e8b040" stroke="#8a5a10" stroke-width="0.6" /><path d="M791 99.5L792 100.8L783.5 109L782.5 108Z" fill="#ffe9a8" /><path d="M782 108L784 110L782.8 111.2L780.8 109.2Z" fill="#f4f4f4" /><path d="M780.8 109.2L782.8 111.2C782 113 779.5 113.8 778 113.5C777.8 112 778.8 109.8 780.8 109.2Z" fill="#e0501c" /><circle cx="789" cy="133.5" r="3.3" fill="#c4d8f2" stroke="#8aa0c0" stroke-width="0.6" /><circle cx="784.5" cy="132" r="3.6" fill="#b4cdf0" stroke="#6a86b8" stroke-width="0.8" /><circle cx="778" cy="124.5" r="3.6" fill="url(#gs)" stroke="#8a8c90" stroke-width="0.6" /><path d="M784 122.5H788V126" fill="none" stroke="#ececec" stroke-width="1.1" /><path d="M786.2 125.2H789.8L788 127.5Z" fill="#ececec" /><path d="M781 145.5V157H775Z" fill="url(#gh)" /><path d="M784 145.5V157H790.5Z" fill="url(#gbh)" /><line x1="782.5" y1="143" x2="782.5" y2="159.5" stroke="#ffffff" stroke-width="1.1" /><path d="M791 180H778.5C775.5 180 775.5 174.5 778.5 174.5H781V170C781 166 788 166 788 170V174.5H791" fill="none" stroke="#9ab8ea" stroke-width="3.2" stroke-linejoin="round"/><path d="M791 180H778.5C775.5 180 775.5 174.5 778.5 174.5H781V170C781 166 788 166 788 170V174.5H791" fill="none" stroke="#ffffff" stroke-width="1.2" stroke-linejoin="round"/><path d="M791 180H778.5C775.5 180 775.5 174.5 778.5 174.5H781V170C781 166 788 166 788 170V174.5H791" fill="none" stroke="#5d5d5d" stroke-width="0.5" stroke-linejoin="round"/><rect x="775.5" y="187.5" width="6" height="6" fill="#f0f0f0" stroke="#1e2024" stroke-width="1.2" /><rect x="784" y="187" width="7.2" height="7" fill="#a4c4f0" /><rect x="786" y="189" width="3.2" height="3" fill="#c4dcf8" /><rect x="775" y="196" width="7.2" height="7" fill="#a4c4f0" /><rect x="777" y="198" width="3.2" height="3" fill="#c4dcf8" /><rect x="784" y="196" width="7.2" height="7" fill="#a4c4f0" /><path d="M784 203V196H791.2Z" fill="#c4dcf8" /><path d="M791.2 198.5V203H786.7Z" fill="#000000" /><path d="M782.5 209L785.5 212.5H784V215.5H781V212.5H779.5ZM782.5 225.5L785.5 222H784V219H781V222H779.5ZM774.5 217.3L778 214.3V215.8H780.5V218.8H778V220.3ZM790.8 217.3L787.3 214.3V215.8H784.8V218.8H787.3V220.3Z" fill="#f4f4f4" /><rect x="781" y="215.8" width="3.2" height="3.2" fill="#8fb0ea" stroke="#2c4c9a" stroke-width="0.8" /><circle cx="782.5" cy="240.3" r="6.5" fill="none" stroke="#e0e0e0" stroke-width="1.3" stroke-dasharray="36 5" stroke-dashoffset="-2.5"/><path d="M781.2 231.5L785.5 233.8L781.2 236.2Z" fill="#7aa0e8" /><rect x="776" y="254" width="14.5" height="14.5" fill="url(#gbd2)" stroke="#e8eefa" stroke-width="0.8" /><rect x="776.3" y="260" width="8" height="8.3" fill="url(#gw)" stroke="#2e3034" stroke-width="0.9" /><path d="M783 276H787.5L790.5 290.5H783Z" fill="#b4cdf0" stroke="#24407a" stroke-width="0.9" /><rect x="776" y="276" width="7.3" height="14.5" fill="url(#gw)" stroke="#2e3034" stroke-width="0.9" /><path d="M779 285.5H784.5" fill="none" stroke="#000000" stroke-width="1.4" /><path d="M783.5 283L786.8 285.5L783.5 288Z" fill="#000000" /><line x1="775" y1="304.5" x2="779.5" y2="304.5" stroke="#ffffff" stroke-width="1.2" /><line x1="784" y1="304.5" x2="791" y2="304.5" stroke="#8fb0ea" stroke-width="1" stroke-dasharray="1.5 1.2"/><line x1="778.2" y1="310.5" x2="784" y2="298.8" stroke="#7a9ae0" stroke-width="1.3" /><line x1="775" y1="326.5" x2="779.5" y2="326.5" stroke="#ffffff" stroke-width="1.2" /><line x1="780.5" y1="326.5" x2="786" y2="326.5" stroke="#8fb0ea" stroke-width="1" stroke-dasharray="1.5 1.2"/><line x1="785.2" y1="333" x2="791" y2="321" stroke="#7a9ae0" stroke-width="1.3" /><rect x="776" y="345" width="15" height="9" fill="url(#gw)" stroke="#2e3034" stroke-width="0.9" /><rect x="786" y="342.8" width="3" height="3" fill="#7aa0e8" /><rect x="776" y="367" width="14" height="9" fill="url(#gw)" stroke="#2e3034" stroke-width="0.9" /><rect x="778" y="364.8" width="3" height="3" fill="#7aa0e8" /><rect x="785" y="364.8" width="3" height="3" fill="#7aa0e8" /><line x1="776" y1="393.5" x2="790.5" y2="393.5" stroke="#ffffff" stroke-width="1.1" /><path d="M779.8 390.3L786.4 396.7V390.3L779.8 396.7Z" fill="#7a9cf0" /><path d="M776 414L782 408H790V422H776Z" fill="url(#gw)" stroke="#2e3034" stroke-width="0.9" /><line x1="775.5" y1="411.8" x2="780.8" y2="406.5" stroke="#8a9ccc" stroke-width="2" /><path d="M777.5 438C777.5 434 781 431.5 785 431.5H790V444H777.5Z" fill="url(#gw)" stroke="#1e2024" stroke-width="1" /><path d="M775.5 436.5C776 432.5 778.5 430 782.5 429.5" fill="none" stroke="#8a9ccc" stroke-width="2" /><path d="M777 459C779 454 781.5 454 783 457.5C785 461.5 787.5 460.5 789 457.5" fill="none" stroke="#3a86d8" stroke-width="1.3" /><path d="M775.5 465L776.5 460.5M790 454L790.8 451" fill="none" stroke="#e8e8e8" stroke-width="1.2" /><circle cx="777" cy="459" r="1.8" fill="#1a2a8a" stroke="#0a1030" stroke-width="0.8" /><circle cx="789" cy="457.5" r="1.8" fill="#1a2a8a" stroke="#0a1030" stroke-width="0.8" /><path d="M780.5 476L784 473.5H789L785.5 476Z" fill="#e6f0fc" /><path d="M775 481L777.5 478.5V485.5L775 488Z" fill="#c4d8f2" /><path d="M787 480L791 477V484.5L787 487.5Z" fill="#dce8fa" /><rect x="778.5" y="479.5" width="7" height="8.5" fill="#a9c8f4" stroke="#7a9ad8" stroke-width="0.6" /><path d="M779 479L782 477H787L785 479Z" fill="#c8dcf6" /><rect x="772" y="494" width="23" height="8.5" fill="#5a5a5a" /><rect x="775" y="496" width="1" height="1.3" fill="#141414" shape-rendering="crispEdges"/><rect x="775" y="498" width="1" height="1.3" fill="#141414" shape-rendering="crispEdges"/><rect x="775" y="499.6" width="1" height="1" fill="#9a9a9a" shape-rendering="crispEdges"/><rect x="777" y="496" width="1" height="1.3" fill="#141414" shape-rendering="crispEdges"/><rect x="777" y="498" width="1" height="1.3" fill="#141414" shape-rendering="crispEdges"/><rect x="777" y="499.6" width="1" height="1" fill="#9a9a9a" shape-rendering="crispEdges"/><rect x="779" y="496" width="1" height="1.3" fill="#141414" shape-rendering="crispEdges"/><rect x="779" y="498" width="1" height="1.3" fill="#141414" shape-rendering="crispEdges"/><rect x="779" y="499.6" width="1" height="1" fill="#9a9a9a" shape-rendering="crispEdges"/><rect x="781" y="496" width="1" height="1.3" fill="#141414" shape-rendering="crispEdges"/><rect x="781" y="498" width="1" height="1.3" fill="#141414" shape-rendering="crispEdges"/><rect x="781" y="499.6" width="1" height="1" fill="#9a9a9a" shape-rendering="crispEdges"/><rect x="783" y="496" width="1" height="1.3" fill="#141414" shape-rendering="crispEdges"/><rect x="783" y="498" width="1" height="1.3" fill="#141414" shape-rendering="crispEdges"/><rect x="783" y="499.6" width="1" height="1" fill="#9a9a9a" shape-rendering="crispEdges"/><rect x="785" y="496" width="1" height="1.3" fill="#141414" shape-rendering="crispEdges"/><rect x="785" y="498" width="1" height="1.3" fill="#141414" shape-rendering="crispEdges"/><rect x="785" y="499.6" width="1" height="1" fill="#9a9a9a" shape-rendering="crispEdges"/><rect x="787" y="496" width="1" height="1.3" fill="#141414" shape-rendering="crispEdges"/><rect x="787" y="498" width="1" height="1.3" fill="#141414" shape-rendering="crispEdges"/><rect x="787" y="499.6" width="1" height="1" fill="#9a9a9a" shape-rendering="crispEdges"/><rect x="776" y="505.5" width="9" height="4.5" fill="#f4f4f4" /><rect x="778" y="508" width="10" height="3" fill="#3a3a3a" />
<rect x="4.2" y="517" width="1.8" height="1.6" fill="#a0a0a0" /><rect x="4.2" y="520" width="1.8" height="1.6" fill="#c4c4c4" /><rect x="7.2" y="517" width="1.8" height="1.6" fill="#a0a0a0" /><rect x="7.2" y="520" width="1.8" height="1.6" fill="#c4c4c4" /><rect x="10.2" y="517" width="1.8" height="1.6" fill="#a0a0a0" /><rect x="10.2" y="520" width="1.8" height="1.6" fill="#c4c4c4" /><rect x="13.2" y="517" width="1.8" height="1.6" fill="#a0a0a0" /><rect x="13.2" y="520" width="1.8" height="1.6" fill="#c4c4c4" /><rect x="16.2" y="517" width="1.8" height="1.6" fill="#a0a0a0" /><rect x="16.2" y="520" width="1.8" height="1.6" fill="#c4c4c4" /><rect x="19.2" y="517" width="1.8" height="1.6" fill="#a0a0a0" /><rect x="19.2" y="520" width="1.8" height="1.6" fill="#c4c4c4" /><path d="M8.5 530.5L15.5 537.5M15.5 530.5L8.5 537.5" fill="none" stroke="#f4f4f4" stroke-width="1.8" /><path d="M10 555L16.8 561.8" fill="none" stroke="#f4f4f4" stroke-width="2.8" stroke-linecap="round"/><circle cx="9.2" cy="554.2" r="3.6" fill="#f4f4f4" /><path d="M9.6 554.6L3.5 552.5L7.5 548.5Z" fill="#5a5a5a" /><circle cx="16.3" cy="561.3" r="0.7" fill="#5a5a5a" /><rect x="29.5" y="551.5" width="14" height="13" fill="#e6e8ec" stroke="#a4aab2" stroke-width="1" rx="1.5"/><path d="M32.5 554.5L36 557.8L32.5 561" fill="none" stroke="#444" stroke-width="1.2" /><line x1="36.5" y1="561.5" x2="40.5" y2="561.5" stroke="#444" stroke-width="1.1" /><path d="M47 557.5H53L50 560.5Z" fill="#8a8a8a" /><rect x="302.5" y="571.5" width="25" height="26" fill="#4f4f4f" stroke="#8a8a8a" stroke-width="1" /><rect x="328.5" y="571.5" width="102" height="26" fill="#4f4f4f" stroke="#8a8a8a" stroke-width="1" /><rect x="431.5" y="571.5" width="63" height="26" fill="#4f4f4f" stroke="#8a8a8a" stroke-width="1" /><rect x="495.5" y="571.5" width="24" height="26" fill="#4f4f4f" stroke="#8a8a8a" stroke-width="1" /><rect x="522.5" y="571.5" width="24" height="26" fill="#4f4f4f" stroke="#8a8a8a" stroke-width="1" /><rect x="548.5" y="571.5" width="107" height="26" fill="#4f4f4f" stroke="#8a8a8a" stroke-width="1" /><rect x="656.5" y="571.5" width="40" height="26" fill="#4f4f4f" stroke="#8a8a8a" stroke-width="1" /><rect x="697.5" y="571.5" width="25" height="26" fill="#4f4f4f" stroke="#8a8a8a" stroke-width="1" /><rect x="724.5" y="571.5" width="25" height="26" fill="#4f4f4f" stroke="#8a8a8a" stroke-width="1" /><rect x="750.5" y="571.5" width="25" height="26" fill="#4f4f4f" stroke="#8a8a8a" stroke-width="1" /><rect x="777.5" y="571.5" width="24" height="26" fill="#4f4f4f" stroke="#8a8a8a" stroke-width="1" /><path d="M310.5 577.5V585.5M306.5 581.5H314.5" fill="none" stroke="#f4f4f4" stroke-width="1.2" /><rect x="313" y="586.5" width="10.5" height="4" fill="#e4e4e4" rx="1.5"/><path d="M334.5 577V590M334 589.5H347.5" fill="none" stroke="#3a8ee6" stroke-width="1.5" /><path d="M334.5 585.5H339.5V589.5" fill="none" stroke="#3a8ee6" stroke-width="1.2" /><circle cx="364" cy="583.8" r="6.6" fill="none" stroke="#c8c8c8" stroke-width="1.3" /><path d="M364 583.5H372.5M364 583.5L370.5 577" fill="none" stroke="#c8c8c8" stroke-width="1.2" /><path d="M380 582H387L383.5 586Z" fill="#f4f4f4" /><path d="M403.5 574V593M396.5 575L412 592" fill="none" stroke="#b8b8b8" stroke-width="1.3" /><path d="M419 582H426L422.5 586Z" fill="#f4f4f4" /><path d="M448.5 577.5L435.5 590.5H451.5" fill="none" stroke="#3a8ee6" stroke-width="1.5" stroke-linejoin="round"/><rect x="440" y="583" width="3.5" height="3.5" fill="#3a8ee6" /><rect x="461.5" y="577.5" width="13.5" height="13.5" fill="none" stroke="#3a8ee6" stroke-width="1.5" /><rect x="460.5" y="576.5" width="5" height="5" fill="#101010" /><rect x="461.7" y="577.7" width="2.6" height="2.6" fill="#22e022" /><path d="M483 582H490L486.5 586Z" fill="#f4f4f4" /><rect x="499" y="577" width="16.5" height="2" fill="#dcdcdc" /><rect x="499" y="581" width="16.5" height="3" fill="#dcdcdc" /><rect x="499" y="586.5" width="9" height="4" fill="#dcdcdc" /><path d="M527.5 578.5V590.5H540" fill="none" stroke="#ececec" stroke-width="1" /><path d="M525.8 579.8L527.5 577L529.2 579.8ZM539 588.8L541.8 590.5L539 592.2Z" fill="#ececec" /><path d="M528.5 589.5L534.5 583.5" fill="none" stroke="#ececec" stroke-width="0.9" stroke-dasharray="1.5 1"/><path d="M538 577L534.8 581.3H537.3L535.5 585.5L541 580H538.4L540.2 577Z" fill="#f0f0f0" /><path d="M560.8 576.3C560.2 582 557.5 587.5 552.8 592.3L558.8 592C559.8 590.3 560.7 588.3 561.3 586C562 588.3 563 590.3 564.3 592L569.8 592.3C566 588 563.5 583.5 563 579Z" fill="#2f8ae8" /><circle cx="564.8" cy="580" r="2.7" fill="#4a4a4a" stroke="#2f8ae8" stroke-width="1.4" /><path d="M584.8 576.3C584.2 582 581.5 587.5 576.8 592.3L582.8 592C583.8 590.3 584.7 588.3 585.3 586C586 588.3 587 590.3 588.3 592L593.8 592.3C590 588 587.5 583.5 587 579Z" fill="#c4c4c4" /><path d="M590.5 576L587 581.5H589.6L588 586L593.2 580H590.6L592.4 576Z" fill="#e4e4e4" stroke="#4f4f4f" stroke-width="0.7" /><path d="M608.8 576.3C608.2 582 605.5 587.5 600.8 592.3L606.8 592C607.8 590.3 608.7 588.3 609.3 586C610 588.3 611 590.3 612.3 592L617.8 592.3C614 588 611.5 583.5 611 579Z" fill="#c4c4c4" /><text x="626.5" y="590" font-family="Liberation Sans, sans-serif" font-size="10.5" fill="#d8d8d8">1:1</text><path d="M643 582H650L646.5 586Z" fill="#f4f4f4" /><circle cx="670" cy="583.5" r="4" fill="none" stroke="#b0b0b0" stroke-width="3.4" stroke-dasharray="2.2 1.6"/><circle cx="670" cy="583.5" r="3" fill="none" stroke="#b0b0b0" stroke-width="2" /><path d="M684.5 582H691.5L688.0 586Z" fill="#f4f4f4" /><path d="M709.5 577V591M702 584.5H716" fill="none" stroke="#dcdcdc" stroke-width="1.6" /><rect x="732.5" y="580.5" width="7.5" height="8.5" fill="none" stroke="#d0d0d0" stroke-width="1" /><path d="M734 583.5H739M734 586H739" fill="none" stroke="#d0d0d0" stroke-width="0.9" stroke-dasharray="1.5 1"/><rect x="755.5" y="576.5" width="6" height="6" fill="none" stroke="#d0d0d0" stroke-width="1.1" /><circle cx="767" cy="582.5" r="3" fill="none" stroke="#d0d0d0" stroke-width="1.1" /><path d="M761.5 585L758 590.5H765Z" fill="none" stroke="#d0d0d0" stroke-width="1.1" /><circle cx="789.5" cy="584.5" r="8.2" fill="#1a63b8" stroke="#3a8ee6" stroke-width="1" /><path d="M788.5 587L795 583" fill="none" stroke="#3a8ee6" stroke-width="1.4" stroke-linecap="round"/>
</svg>
<div class="wm" id="wm1">头条</div><div class="wm" id="wm2"> @</div><div class="wm" id="wm3">小黄花</div><div class="wm" id="wm4">CAD</div>
<div id="topline"></div><div id="leftline"></div><div id="leftline2"></div><div id="rightline"></div>
</body></html>
